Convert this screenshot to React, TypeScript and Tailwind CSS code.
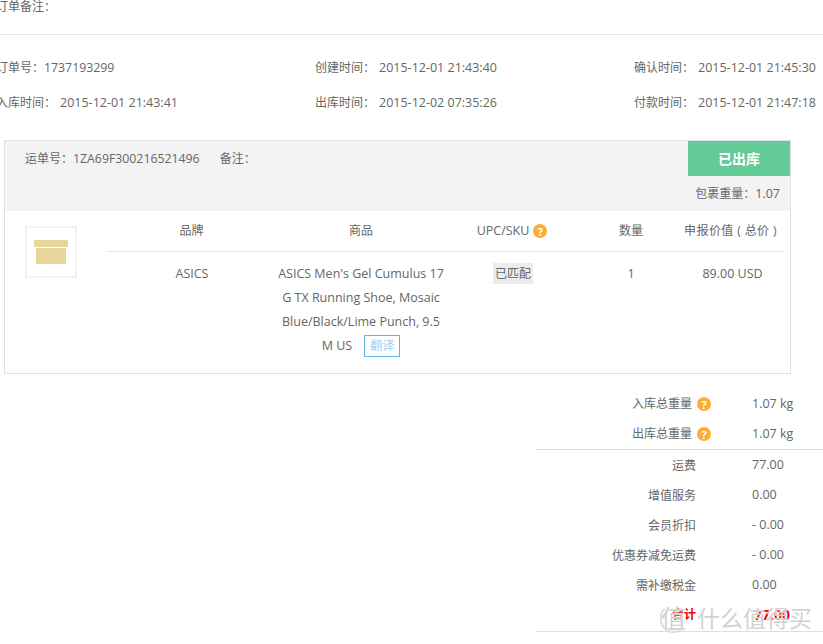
const font = { fontFamily: '"Open Sans", "Noto Sans CJK SC", sans-serif' };

function Help() {
  return (
    <span className="inline-flex h-[14px] w-[14px] shrink-0 items-center justify-center rounded-full bg-[#fbae33] text-[11px] font-bold leading-none text-white">
      ?
    </span>
  );
}

const infoRows = [
  [
    ["订单号：", "1737193299"],
    ["创建时间：", "2015-12-01 21:43:40"],
    ["确认时间：", "2015-12-01 21:45:30"],
  ],
  [
    ["入库时间：", "2015-12-01 21:43:41"],
    ["出库时间：", "2015-12-02 07:35:26"],
    ["付款时间：", "2015-12-01 21:47:18"],
  ],
];

const fees = [
  ["运费", "77.00"],
  ["增值服务", "0.00"],
  ["会员折扣", "- 0.00"],
  ["优惠券减免运费", "- 0.00"],
  ["需补缴税金", "0.00"],
];

export default function App() {
  return (
    <div
      className="relative h-[644px] w-[823px] overflow-hidden bg-white text-[12px] text-[#666]"
      style={font}
    >
      {/* 订单备注 */}
      <div className="-ml-[4px] h-[35px] border-b border-[#e6e6e6] leading-[14px]">订单备注：</div>

      {/* 时间信息 */}
      <div className="-ml-[4px] mt-[16px] flex flex-col">
        {infoRows.map((row, i) => (
          <div key={i} className="grid h-[35px] grid-cols-[319px_319px_auto] items-center">
            {row.map(([label, value], j) => (
              <div key={label} className="whitespace-pre">
                {label}
                <span className={j === 0 && i === 0 ? "text-[12.3px]" : "ml-[4px] text-[12.5px]"}>{value}</span>
              </div>
            ))}
          </div>
        ))}
      </div>

      {/* 包裹 */}
      <div className="ml-[4px] mt-[19px] h-[234px] w-[787px] border border-[#e1e1e1]">
        <div className="flex h-[70px] justify-between bg-[#f3f3f3]">
          <div className="flex gap-[20px] pl-[20px] pt-[10px] leading-[16px]">
            <span>
              运单号：<span className="text-[12.3px]">1ZA69F300216521496</span>
            </span>
            <span>备注：</span>
          </div>
          <div className="flex w-[102px] flex-col items-end">
            <div className="flex h-[35px] w-full items-center justify-center bg-[#63cb97] text-[14px] font-bold text-white">
              已出库
            </div>
            <div className="pr-[10px] pt-[10px] leading-[16px]">
              包裹重量：<span className="text-[12.5px]">1.07</span>
            </div>
          </div>
        </div>

        <div className="flex">
          <div className="ml-[20px] mt-[15px] flex h-[52px] w-[52px] items-center justify-center border-2 border-[#f3f3f3]">
            <svg width="34" height="24" viewBox="0 0 34 24">
              <rect x="0" y="0" width="34" height="7" fill="#e8d59b" />
              <rect x="2" y="8" width="30" height="16" fill="#e8d59b" />
            </svg>
          </div>
          <div className="ml-[30px] w-[676px]">
            <div className="grid h-[41px] grid-cols-[169px_170px_134px_102px_101px] items-center border-b border-[#e6e6e6] text-center">
              <div>品牌</div>
              <div>商品</div>
              <div className="flex items-center justify-center gap-[4px] pr-[2px] text-[12.5px]">
                UPC/SKU <Help />
              </div>
              <div>数量</div>
              <div className="whitespace-pre pr-[4px] tracking-[0.4px]">申报价值 ( 总价 )</div>
            </div>
            <div className="grid grid-cols-[169px_170px_134px_102px_101px] pt-[10px] text-center text-[12.5px] leading-[24px]">
              <div className="pl-[1px]">ASICS</div>
              <div>
                ASICS Men's Gel Cumulus 17 G TX Running Shoe, Mosaic Blue/Black/Lime Punch, 9.5 M US
                <span className="ml-[12px] inline-block border border-[#63b4ee] px-[5px] text-[12px] leading-[20px] text-[#9fd0f2]">
                  翻译
                </span>
              </div>
              <div>
                <span className="inline-block h-[21px] bg-[#ececec] px-[2px] text-[12px] leading-[21px]">已匹配</span>
              </div>
              <div>1</div>
              <div>89.00 USD</div>
            </div>
          </div>
        </div>
      </div>

      {/* 汇总 */}
      <div className="ml-[536px] mt-[15px] border-b border-[#dedede]">
        <div className="border-b border-[#dedede]">
          {[
            ["入库总重量", "1.07 kg"],
            ["出库总重量", "1.07 kg"],
          ].map(([label, value]) => (
            <div key={label} className="flex h-[30px] items-center">
              <div className="flex w-[175px] items-center justify-end gap-[5px]">
                {label} <Help />
              </div>
              <div className="ml-[41px] text-[12.5px]">{value}</div>
            </div>
          ))}
        </div>
        {fees.map(([label, value]) => (
          <div key={label} className="flex h-[30px] items-center">
            <div className="w-[160px] translate-y-[1px] text-right">{label}</div>
            <div className="ml-[56px] text-[12.5px]">{value}</div>
          </div>
        ))}
        <div className="flex h-[31px] items-center pb-[2px] font-bold text-[#f00000]">
          <div className="w-[160px] text-right">合计</div>
          <div className="ml-[58px] text-[14px]">77.00</div>
        </div>
      </div>

      {/* 水印 */}
      <div className="absolute left-[660px] top-[603px] flex items-center gap-[10px] text-[#d2d2d2]">
        <span className="flex h-[29px] w-[27px] items-center justify-center rounded-full border-2 border-[#dcdcdc] border-r-transparent border-t-transparent text-[25px] leading-none [text-shadow:0_0_2px_#fff]">
          值
        </span>
        <span className="text-[23px] leading-[30px] [text-shadow:0_0_1px_#fff]">什么值得买</span>
      </div>
    </div>
  );
}
